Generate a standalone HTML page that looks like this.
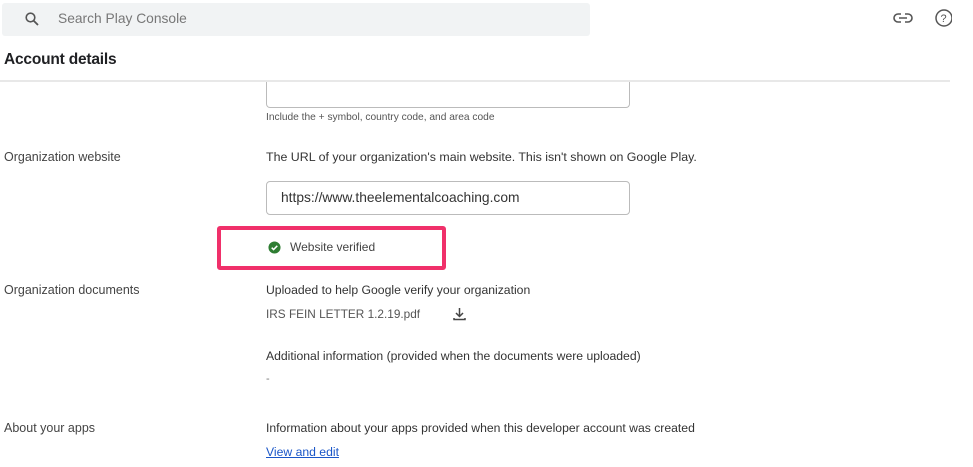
<!DOCTYPE html>
<html><head><meta charset="utf-8"><style>
body{margin:0;width:973px;height:467px;background:#fff;font-family:"Liberation Sans",sans-serif;position:relative;overflow:hidden;color:#3c4043}
.a{position:absolute;white-space:nowrap}
.s{font-size:12.5px;color:#444}
.m{font-size:12.2px;color:#333}
</style></head><body>
<div class="a" style="left:2px;top:3px;width:588px;height:33px;background:#f1f3f4;border-radius:3px"></div>
<svg class="a" style="left:24px;top:11px" width="16" height="16" viewBox="0 0 16 16"><circle cx="6.5" cy="6.5" r="4.3" fill="none" stroke="#555" stroke-width="1.6"/><path d="M9.7 9.7L14 14" stroke="#555" stroke-width="1.8"/></svg>
<div class="a" style="left:58px;top:11px;font-size:13.8px;color:#777">Search Play Console</div>
<svg class="a" style="left:893px;top:10px" width="20" height="16" viewBox="0 0 20 16"><path d="M8 4H5a4 4 0 000 8h3M12 4h3a4 4 0 010 8h-3M6 8h8" fill="none" stroke="#555" stroke-width="1.6"/></svg>
<svg class="a" style="left:934px;top:8px" width="18" height="20" viewBox="0 0 18 20"><circle cx="10" cy="10" r="8" fill="none" stroke="#555" stroke-width="1.5"/><text x="6.5" y="14" font-size="11" fill="#555" font-family="Liberation Sans">?</text></svg>
<div class="a" style="left:4px;top:51px;font-size:15.5px;color:#202124;font-weight:bold;letter-spacing:-0.2px">Account details</div>
<div class="a" style="left:0;top:80px;width:950px;height:2px;background:#e8e8e8"></div>
<div class="a" style="left:266px;top:82px;width:362px;height:25px;border:1px solid #bbb;border-top:none;border-radius:0 0 4px 4px"></div>
<div class="a" style="left:266px;top:112px;font-size:10.2px;color:#555">Include the + symbol, country code, and area code</div>
<div class="a s" style="left:4px;top:150px">Organization website</div>
<div class="a m" style="left:266px;top:150px;font-size:12.4px">The URL of your organization's main website. This isn't shown on Google Play.</div>
<div class="a" style="left:266px;top:181px;width:362px;height:32px;border:1px solid #bbb;border-radius:4px"></div>
<div class="a" style="left:281px;top:190px;font-size:13.8px;color:#333">https://www.theelementalcoaching.com</div>
<div class="a" style="left:217px;top:226px;width:221px;height:36px;border:4px solid #f0306a;border-radius:3px;background:#fff"></div>
<svg class="a" style="left:268px;top:241px" width="13" height="13" viewBox="0 0 14 14"><circle cx="7" cy="7" r="6.5" fill="#2e7d32"/><path d="M4 7.2l2 2 4-4" fill="none" stroke="#fff" stroke-width="1.6"/></svg>
<div class="a" style="left:290px;top:240px;font-size:12px;color:#444">Website verified</div>
<div class="a s" style="left:4px;top:283px">Organization documents</div>
<div class="a m" style="left:266px;top:283px">Uploaded to help Google verify your organization</div>
<div class="a" style="left:266px;top:307px;font-size:11.8px;color:#555">IRS FEIN LETTER 1.2.19.pdf</div>
<svg class="a" style="left:452px;top:306px" width="15" height="15" viewBox="0 0 15 15"><path d="M7.5 2v8M4 7l3.5 3.5L11 7M2 12v1.5h11V12" fill="none" stroke="#444" stroke-width="1.5"/></svg>
<div class="a m" style="left:266px;top:349px">Additional information (provided when the documents were uploaded)</div>
<div class="a" style="left:266px;top:373px;font-size:11px;color:#777">-</div>
<div class="a s" style="left:4px;top:421px">About your apps</div>
<div class="a m" style="left:266px;top:421px">Information about your apps provided when this developer account was created</div>
<div class="a" style="left:266px;top:445px;font-size:12.2px;color:#1a56c8;text-decoration:underline">View and edit</div>
</body></html>
